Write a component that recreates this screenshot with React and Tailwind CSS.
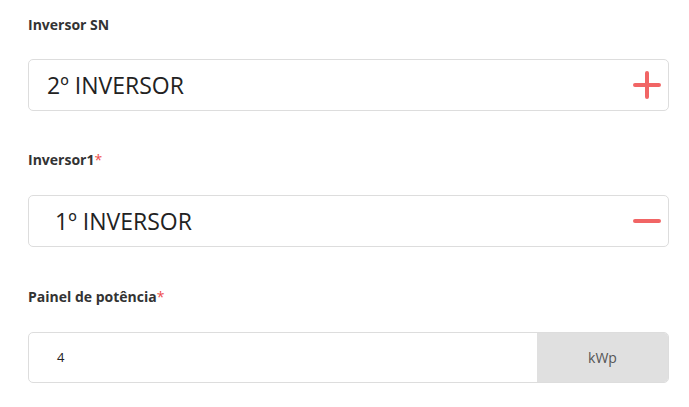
import React from "react";

const font = { fontFamily: '"Open Sans", "Noto Sans", sans-serif' };

const Label = ({ children, required }) => (
  <div className="text-[14px] font-bold text-[#333333] leading-[18px]">
    {children}
    {required && <span className="text-[#ee4d4d] font-normal">*</span>}
  </div>
);

const PlusIcon = () => (
  <svg width="30" height="30" viewBox="0 0 30 30" className="shrink-0">
    <path d="M15 3v24M3 15h24" stroke="#f16565" strokeWidth="4" strokeLinecap="round" />
  </svg>
);

const MinusIcon = () => (
  <svg width="30" height="30" viewBox="0 0 30 30" className="shrink-0">
    <path d="M3 15h24" stroke="#f16565" strokeWidth="4" strokeLinecap="round" />
  </svg>
);

export default function App() {
  return (
    <div className="w-[689px] h-[407px] bg-white pl-7 pr-5 pt-[16px]" style={font}>
      {/* Inversor SN */}
      <Label>Inversor SN</Label>
      <div className="mt-[25px] h-[52px] border border-[#dddddd] rounded-[5px] flex items-center justify-between pl-[18px] pr-[6px]">
        <span className="text-[23px] text-[#222222]">2º INVERSOR</span>
        <PlusIcon />
      </div>

      {/* Inversor1 */}
      <div className="mt-[40px]">
        <Label required>Inversor1</Label>
      </div>
      <div className="mt-[26px] h-[52px] border border-[#dddddd] rounded-[5px] flex items-center justify-between pl-[26px] pr-[6px]">
        <span className="text-[23px] text-[#222222]">1º INVERSOR</span>
        <MinusIcon />
      </div>

      {/* Painel de potência */}
      <div className="mt-[41px]">
        <Label required>Painel de potência</Label>
      </div>
      <div className="mt-[26px] h-[51px] flex rounded-[5px] border border-[#dddddd] overflow-hidden">
        <div className="flex-1 flex items-center pl-[28px] text-[13px] text-[#222222]">4</div>
        <div className="w-[131px] bg-[#e0e0e0] flex items-center justify-center text-[14px] text-[#555555]">
          kWp
        </div>
      </div>
    </div>
  );
}
